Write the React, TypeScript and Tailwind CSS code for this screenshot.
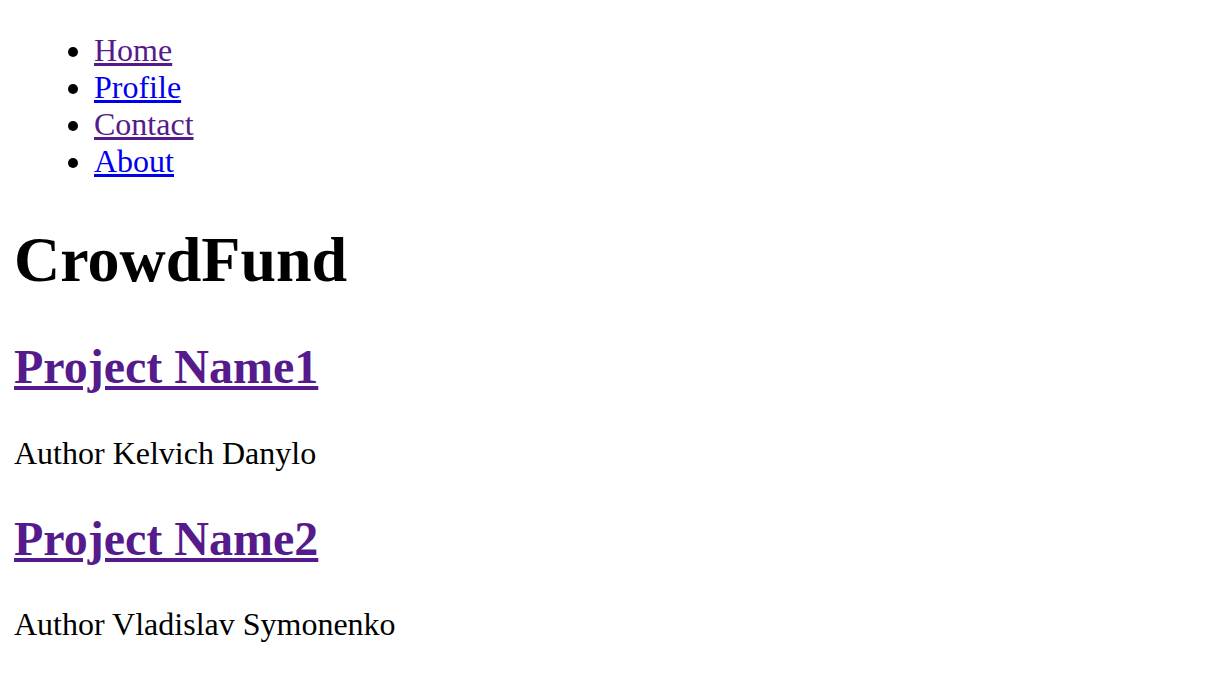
import React from "react";

const navLinks = [
  { label: "Home", visited: true },
  { label: "Profile", visited: false },
  { label: "Contact", visited: true },
  { label: "About", visited: false },
];

const projects = [
  { name: "Project Name1", author: "Kelvich Danylo" },
  { name: "Project Name2", author: "Vladislav Symonenko" },
];

export default function App() {
  return (
    <div className="min-h-screen bg-white px-[14px] pt-[32px] font-['Liberation_Serif',serif] text-[32px] leading-[normal] text-black">
      {/* Nav list */}
      <ul className="list-disc pl-[80px]">
        {navLinks.map((link) => (
          <li key={link.label}>
            <a
              href="#"
              className={
                link.visited
                  ? "text-[#551a8b] underline"
                  : "text-[#0000ee] underline"
              }
            >
              {link.label}
            </a>
          </li>
        ))}
      </ul>

      <h1 className="mt-[43px] text-[64px] font-bold">CrowdFund</h1>

      {projects.map((project, idx) => (
        <div key={project.name}>
          <h2
            className={
              idx === 0
                ? "mt-[42px] text-[48px] font-bold"
                : "mt-[39px] text-[48px] font-bold"
            }
          >
            <a href="#" className="text-[#551a8b] underline">
              {project.name}
            </a>
          </h2>
          <p className={idx === 0 ? "mt-[41px]" : "mt-[40px]"}>
            Author {project.author}
          </p>
        </div>
      ))}
    </div>
  );
}
